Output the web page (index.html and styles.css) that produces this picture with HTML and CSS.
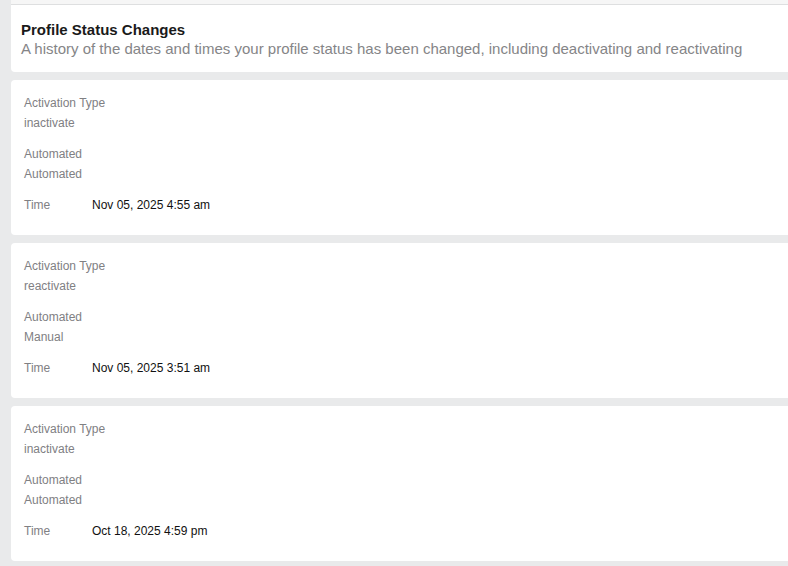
FILE: index.html
```html
<!DOCTYPE html>
<html>
<head>
<meta charset="utf-8">
<link rel="stylesheet" href="styles.css">
</head>
<body>
<div class="page">
  <div class="prev-edge"></div>
  <section class="header-card">
    <h1 class="title">Profile Status Changes</h1>
    <p class="subtitle">A history of the dates and times your profile status has been changed, including deactivating and reactivating</p>
  </section>

  <section class="card">
    <div class="group"><div class="label">Activation Type</div><div class="label">inactivate</div></div>
    <div class="group"><div class="label">Automated</div><div class="label">Automated</div></div>
    <div class="time-row"><span class="label time-label">Time</span><span class="value">Nov 05, 2025 4:55 am</span></div>
  </section>

  <section class="card">
    <div class="group"><div class="label">Activation Type</div><div class="label">reactivate</div></div>
    <div class="group"><div class="label">Automated</div><div class="label">Manual</div></div>
    <div class="time-row"><span class="label time-label">Time</span><span class="value">Nov 05, 2025 3:51 am</span></div>
  </section>

  <section class="card">
    <div class="group"><div class="label">Activation Type</div><div class="label">inactivate</div></div>
    <div class="group"><div class="label">Automated</div><div class="label">Automated</div></div>
    <div class="time-row"><span class="label time-label">Time</span><span class="value">Oct 18, 2025 4:59 pm</span></div>
  </section>
</div>
</body>
</html>
```

FILE: styles.css
```css
html, body {
  margin: 0;
  padding: 0;
  background: #e9eaeb;
  font-family: "Liberation Sans", Arial, sans-serif;
}
.page {
  width: 788px;
  height: 566px;
  overflow: hidden;
  padding-left: 11px;
  box-sizing: border-box;
  display: flex;
  flex-direction: column;
  gap: 8px;
}
.prev-edge {
  height: 4px;
  background: #f6f6f6;
  border-bottom: 1px solid #dedfe0;
  margin-bottom: -8px;
  margin-right: -20px;
}
.header-card, .card {
  background: #fff;
  border-radius: 4px 0 0 4px;
  margin-right: -20px;
}
.header-card {
  height: 67px;
  box-sizing: border-box;
  padding: 15px 10px 0 10px;
  border-radius: 0 0 0 4px;
}
.title {
  margin: 0;
  font-size: 15px;
  font-weight: bold;
  color: #1a1a1a;
  line-height: 19px;
}
.subtitle {
  margin: 0;
  font-size: 15px;
  color: #858587;
  line-height: 19px;
}
.card {
  height: 155px;
  box-sizing: border-box;
  padding: 13px 13px 0 13px;
  display: flex;
  flex-direction: column;
  gap: 11px;
}
.label {
  font-size: 12px;
  line-height: 20px;
  color: #808083;
}
.time-row {
  display: flex;
  align-items: center;
  line-height: 20px;
}
.time-label {
  width: 68px;
}
.value {
  font-size: 12px;
  color: #111;
}
```
